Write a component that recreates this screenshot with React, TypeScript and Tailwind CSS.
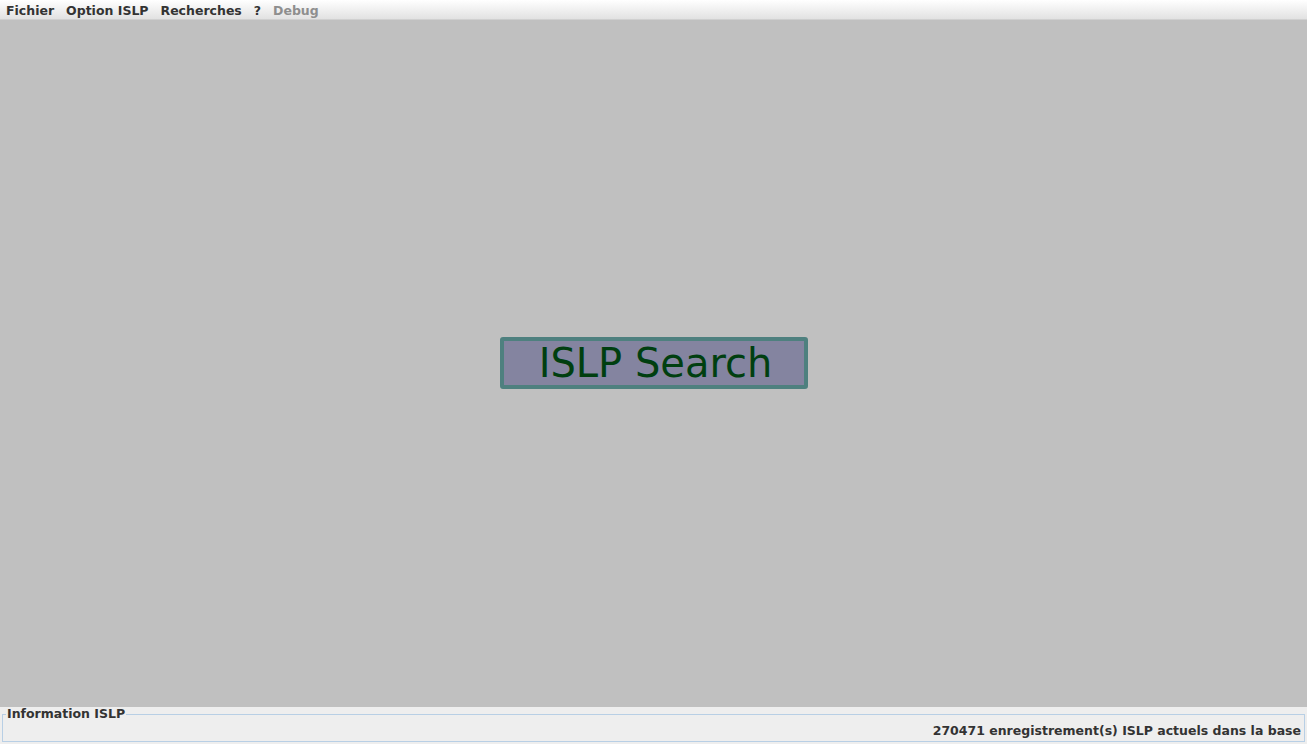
export default function App() {
  return (
    <div
      className="flex h-[744px] w-[1307px] flex-col overflow-hidden bg-[#eeeeee] text-[#333333]"
      style={{ fontFamily: '"DejaVu Sans", sans-serif' }}
    >
      <div className="flex h-[20px] items-center bg-gradient-to-b from-[#ffffff] to-[#e2e2e2] border-b border-[#d0d0d0] pt-[3px] text-[12.5px] font-bold leading-none">
        <span className="pl-[6px] pr-[6px]">Fichier</span>
        <span className="px-[6px]">Option ISLP</span>
        <span className="px-[6px]">Recherches</span>
        <span className="px-[6px]">?</span>
        <span className="px-[6px] text-[#8e8e8e]">Debug</span>
      </div>
      <div className="flex flex-1 items-center justify-center bg-[#c0c0c0]">
        <button className="-mt-[2px] flex h-[52px] w-[308px] items-center justify-center rounded-[3px] border-[4px] border-[#4e807f] bg-[#8484a0] pl-[4px] text-[40px] leading-none text-[#003f10]">
          ISLP Search
        </button>
      </div>
      <div className="h-[37px] px-[2px] pt-[1px] pb-[2px]">
        <fieldset className="h-[34px] border border-[#b8cfe5] px-[3px]">
          <legend className="px-[1px] text-[12.5px] font-bold leading-none">Information ISLP</legend>
          <div className="mt-[4px] text-right text-[12.5px] font-bold leading-none">
            270471 enregistrement(s) ISLP actuels dans la base
          </div>
        </fieldset>
      </div>
    </div>
  );
}
